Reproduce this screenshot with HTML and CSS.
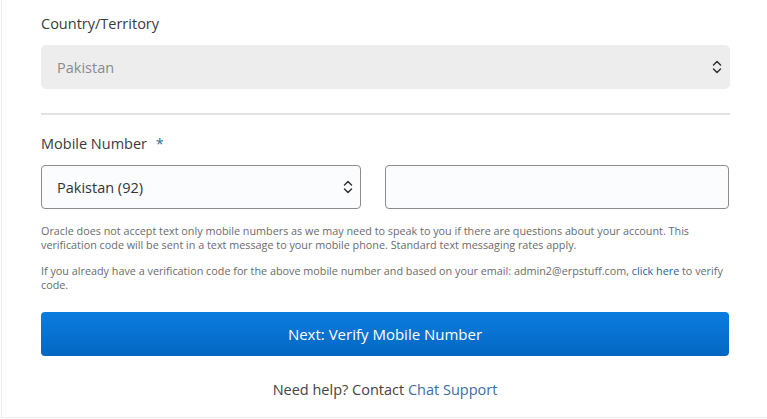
FILE: index.html
```html
<!DOCTYPE html>
<html lang="en">
<head>
<meta charset="utf-8">
<title>Mobile Number</title>
<link rel="stylesheet" href="styles.css">
</head>
<body>
<div class="card">
  <div class="field">
    <label class="label">Country/Territory</label>
    <div class="select disabled">
      <span class="select-text">Pakistan</span>
      <svg class="chev" width="10" height="14" viewBox="0 0 10 14"><path d="M1.5 5 L5 1.5 L8.5 5 M1.5 9 L5 12.5 L8.5 9" fill="none" stroke="#333" stroke-width="1.5" stroke-linecap="round" stroke-linejoin="round"/></svg>
    </div>
  </div>
  <hr class="divider">
  <div class="field">
    <label class="label">Mobile Number <span class="req">*</span></label>
    <div class="row">
      <div class="select boxed">
        <span class="select-text dark">Pakistan (92)</span>
        <svg class="chev" width="10" height="14" viewBox="0 0 10 14"><path d="M1.5 5 L5 1.5 L8.5 5 M1.5 9 L5 12.5 L8.5 9" fill="none" stroke="#333" stroke-width="1.5" stroke-linecap="round" stroke-linejoin="round"/></svg>
      </div>
      <div class="input boxed"></div>
    </div>
  </div>
  <p class="help first">Oracle does not accept text only mobile numbers as we may need to speak to you if there are questions about your account. This verification code will be sent in a text message to your mobile phone. Standard text messaging rates apply.</p>
  <p class="help">If you already have a verification code for the above mobile number and based on your email: admin2@erpstuff.com, <a class="link" href="#">click here</a> to verify code.</p>
  <button class="btn">Next: Verify Mobile Number</button>
  <p class="support">Need help? Contact <a class="link" href="#">Chat Support</a></p>
</div>
</body>
</html>
```
FILE: styles.css
```css
html, body {
  margin: 0;
  padding: 0;
  background: #fff;
  overflow: hidden;
}
body {
  width: 767px;
  height: 419px;
  font-family: "Open Sans", "Noto Sans", sans-serif;
  color: #333;
}
.card {
  margin-left: 1px;
  width: 766px;
  height: 418px;
  border-left: 1px solid #ececec;
  border-bottom: 1px solid #ececec;
  box-sizing: border-box;
  padding: 13px 37px 0 39px;
}
.field {
  display: flex;
  flex-direction: column;
}
.label {
  font-size: 14.5px;
  line-height: 22px;
  color: #3a3a3a;
  margin-bottom: 10px;
}
.req {
  color: #2a6f97;
  margin-left: 5px;
}
.select {
  height: 44px;
  box-sizing: border-box;
  display: flex;
  align-items: center;
  justify-content: space-between;
  padding: 0 7px 0 15px;
  border-radius: 5px;
}
.select.disabled {
  background: #ededee;
  border: 1px solid #ededee;
}
.select-text {
  font-size: 14.5px;
  color: #8a8a8a;
}
.select-text.dark {
  color: #333;
}
.boxed {
  border: 1px solid #8c8c8c;
  border-radius: 4px;
  background: #fbfcfe;
  height: 44px;
  box-sizing: border-box;
}
.divider {
  border: 0;
  height: 2px;
  background: #e2e2e4;
  margin: 24px 0 18px;
}
.row {
  display: grid;
  grid-template-columns: 320px 344px;
  column-gap: 24px;
}
.help {
  font-size: 10.8px;
  line-height: 13.5px;
  color: #6b6b6b;
  margin: 0;
}
.help.first {
  margin-top: 15px;
  margin-bottom: 13px;
}
.link {
  color: #1f5fa6;
  text-decoration: none;
}
.btn {
  display: block;
  width: 688px;
  height: 44px;
  margin-top: 21px;
  border: 0;
  border-radius: 4px;
  background: linear-gradient(#0b7de0, #0367c1);
  color: #fff;
  font-family: "Open Sans", "Noto Sans", sans-serif;
  font-size: 15px;
}
.support {
  text-align: center;
  font-size: 14.5px;
  color: #444;
  margin: 24px 0 0;
  width: 688px;
}
.support .link {
  color: #3a6ea5;
}
```
